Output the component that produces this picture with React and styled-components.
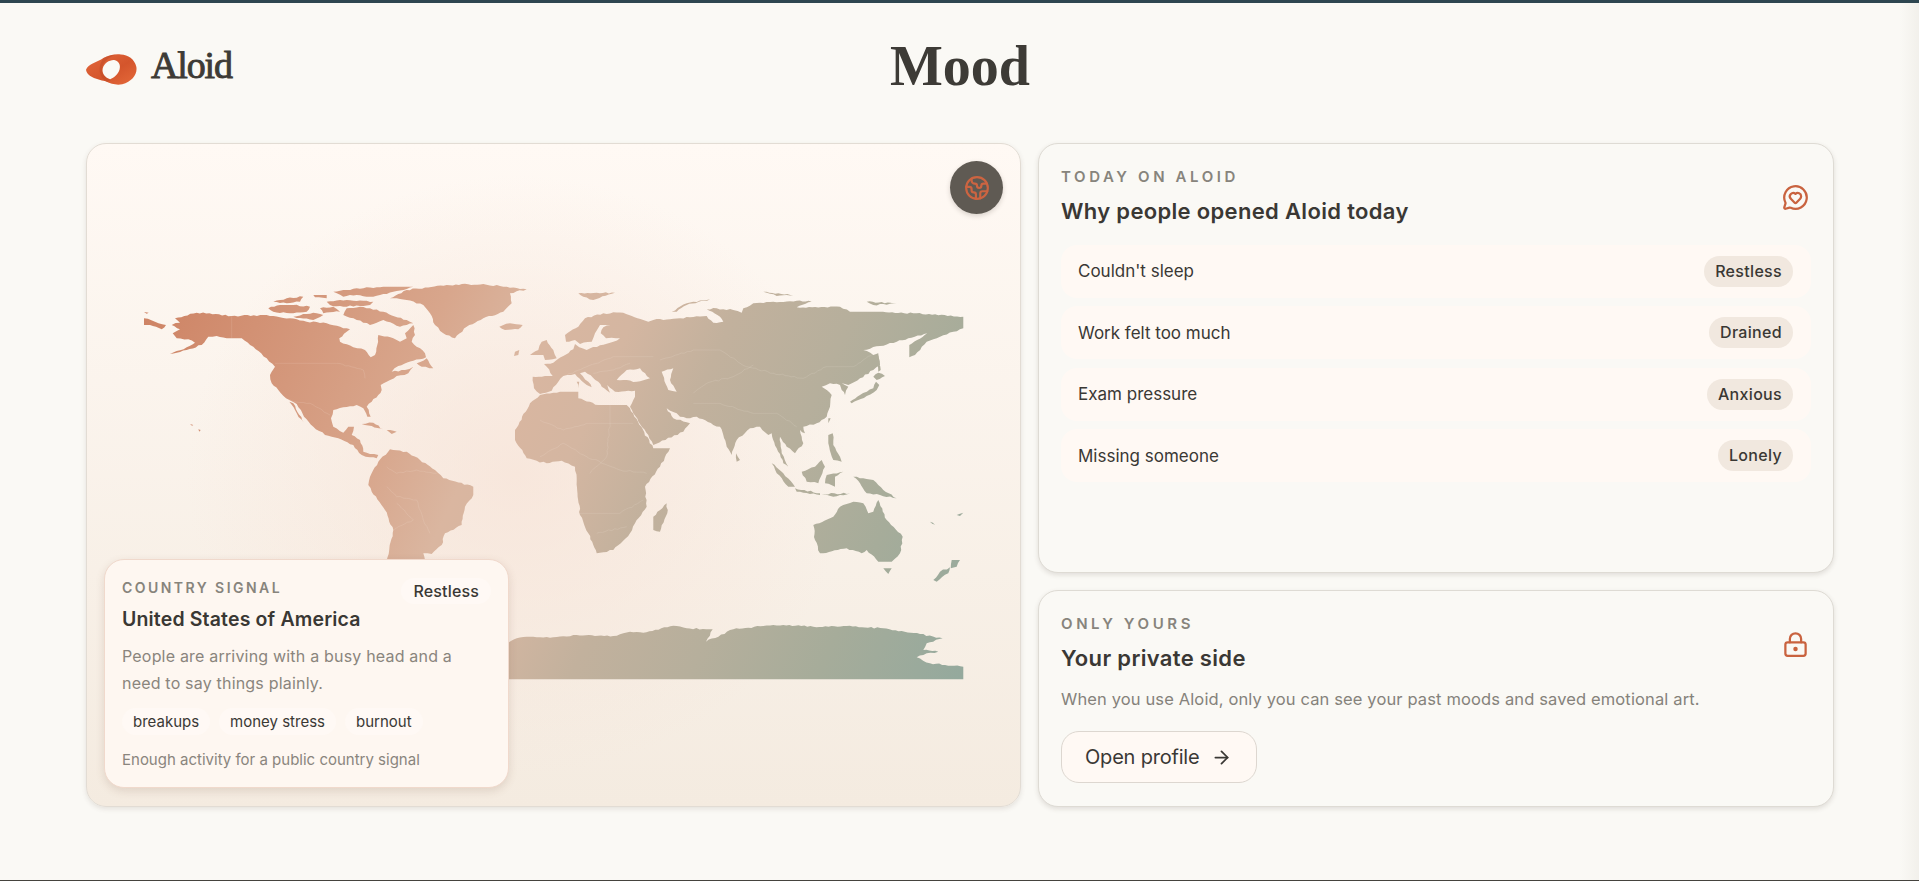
import React from "react";
import styled, { createGlobalStyle } from "styled-components";
import { Earth, MessageCircleHeart, LockKeyhole, ArrowRight } from "lucide-react";

const Global = createGlobalStyle`
  html, body { margin: 0; padding: 0; height: 100%; overflow: hidden; }
  body { background: #faf9f5; color: #3a3834; font-family: Inter, "Open Sans", sans-serif; }
  * { box-sizing: border-box; }
`;

const Page = styled.div`
  height: 881px;
  border-top: 3px solid #2e4650;
  border-bottom: 1px solid #45433e;
  background: linear-gradient(90deg, #faf9f5 0, #faf9f5 99%, #f2f0eb 100%);
  padding: 0 85px 0 86px;
`;
const Header = styled.header`
  height: 140px;
  display: grid;
  grid-template-columns: 1fr auto 1fr;
  align-items: start;
`;
const Brand = styled.div`
  display: flex;
  align-items: center;
  gap: 14px;
  padding-top: 43px;
`;
const BrandName = styled.span`
  margin-bottom: 9px;
  font: 400 38px/1 "Liberation Serif", serif;
  -webkit-text-stroke: 0.9px #3d3b36;
  letter-spacing: -0.03em;
  color: #3d3b36;
`;
const PageTitle = styled.h1`
  margin: 0;
  padding-top: 35px;
  font: 700 56px/1 "Liberation Serif", serif;
  color: #3d3b36;
`;
const Board = styled.main`
  display: grid;
  grid-template-columns: 935px 796px;
  column-gap: 17px;
  height: 664px;
`;
const MapCard = styled.section`
  position: relative;
  overflow: hidden;
  border: 1px solid #e2dcd4;
  border-radius: 20px;
  box-shadow: 0 2px 5px rgba(70, 60, 50, 0.12);
  background:
    radial-gradient(ellipse 330px 300px at 46% 50%, rgba(247, 226, 214, 0.7), rgba(247, 226, 214, 0)),
    linear-gradient(180deg, #fff9f4 0%, #f4ebe0 100%);
`;
const MapSvg = styled.svg`
  display: block;
  width: 100%;
  height: 100%;
`;
const GlobeButton = styled.div`
  position: absolute;
  top: 17px;
  right: 17px;
  width: 53px;
  height: 53px;
  border-radius: 50%;
  background: #5f5a53;
  color: #cc6441;
  display: flex;
  align-items: center;
  justify-content: center;
  box-shadow: 0 2px 5px rgba(70, 60, 50, 0.2);
`;
const SignalPanel = styled.aside`
  position: absolute;
  left: 17px;
  bottom: 18px;
  width: 405px;
  height: 229px;
  padding: 17px;
  border: 1px solid #f0d9cc;
  border-radius: 20px;
  background: #fef7f1;
  box-shadow: 0 3px 8px rgba(120, 80, 60, 0.16);
`;
const SignalTop = styled.div`
  display: flex;
  justify-content: space-between;
  align-items: flex-start;
  padding-top: 1px;
`;
const Eyebrow = styled.div`
  font-size: ${(p) => p.$size || 15}px;
  line-height: 20px;
  font-weight: 600;
  letter-spacing: ${(p) => p.$track || 0.24}em;
  color: #87847c;
`;
const SignalChip = styled.span`
  margin: 0;
  padding: 0 12px;
  height: 26px;
  line-height: 26px;
  font-size: 16px;
  font-weight: 500;
  letter-spacing: 0.01em;
  border-radius: 13px;
  background: #fff9f5;
`;
const CountryName = styled.h3`
  margin: 2px 0 0;
  font-size: 19.5px;
  line-height: 26px;
  font-weight: 600;
  letter-spacing: 0.008em;
  color: #3a3834;
`;
const SignalText = styled.p`
  margin: 11px 0 0;
  font-size: 16px;
  line-height: 27px;
  letter-spacing: 0.012em;
  color: #8a857d;
`;
const Chips = styled.div`
  display: flex;
  gap: 9px;
  margin-top: 11px;
`;
const Chip = styled.span`
  padding: 0 11px;
  height: 27px;
  line-height: 27px;
  font-size: 15px;
  border-radius: 14px;
  background: #fff9f5;
`;
const SignalFoot = styled.div`
  margin-top: 15px;
  font-size: 15px;
  line-height: 20px;
  color: #8a857d;
`;
const Side = styled.div`
  display: grid;
  grid-template-rows: 430px 217px;
  row-gap: 17px;
`;
const Card = styled.section`
  border: 1px solid #dedbd4;
  border-radius: 20px;
  background: #faf9f5;
  box-shadow: 0 2px 5px rgba(70, 60, 50, 0.14);
  padding: 23px 22px 0;
`;
const CardHead = styled.div`
  display: flex;
  justify-content: space-between;
  align-items: flex-start;
  padding-right: 2px;
`;
const CardTitle = styled.h2`
  margin: 9px 0 0;
  font-size: 22px;
  line-height: 30px;
  font-weight: 600;
  letter-spacing: 0.015em;
  color: #3a3834;
`;
const IconSlot = styled.div`
  color: #c9633f;
  display: flex;
  margin-top: 17px;
`;
const Rows = styled.div`
  display: flex;
  flex-direction: column;
  gap: 8.5px;
  margin-top: 18.5px;
`;
const Row = styled.div`
  height: 53px;
  padding: 0 18px 0 17px;
  display: flex;
  align-items: center;
  justify-content: space-between;
  border-radius: 16px;
  background: #fff9f4;
  font-size: 17px;
`;
const Pill = styled.span`
  height: 31px;
  line-height: 31px;
  padding: 0 11px;
  border-radius: 16px;
  background: #f1e8df;
  font-size: 16px;
  font-weight: 500;
  letter-spacing: 0.02em;
`;
const Note = styled.p`
  margin: 13px 0 0;
  font-size: 16.5px;
  line-height: 26px;
  letter-spacing: 0.008em;
  color: #85827b;
`;
const OpenButton = styled.button`
  margin-top: 19px;
  height: 52px;
  width: 196px;
  display: flex;
  align-items: center;
  gap: 12px;
  padding: 0 0 0 23px;
  border: 1px solid #ddd7d0;
  border-radius: 18px;
  background: #fff9f4;
  color: #3a3834;
  font: 400 20px Inter, sans-serif;
  letter-spacing: -0.01em;
`;

let seed = 17;
const rnd = () => {
  seed = (seed * 16807) % 2147483647;
  return seed / 2147483647 - 0.5;
};
const coast = (ox, oy, s, close) => {
  const pts = s
    .trim()
    .split(/\s+/)
    .map((p) => {
      const [x, y] = p.split(",").map(Number);
      return [ox + x / 3, oy + y / 3];
    });
  const out = [];
  const n = close ? pts.length : pts.length - 1;
  for (let i = 0; i < n; i++) {
    const a = pts[i];
    const b = pts[(i + 1) % pts.length];
    out.push(a);
    const dx = b[0] - a[0];
    const dy = b[1] - a[1];
    const len = Math.hypot(dx, dy);
    if (len > 5 && dx !== 0 && dy !== 0) {
      const steps = Math.floor(len / 3);
      for (let k = 1; k < steps; k++) {
        const t = k / steps;
        const w = rnd() * 1.5;
        out.push([a[0] + dx * t - (dy / len) * w, a[1] + dy * t + (dx / len) * w]);
      }
    }
  }
  if (!close) out.push(pts[pts.length - 1]);
  return "M" + out.map((p) => `${p[0].toFixed(1)} ${p[1].toFixed(1)}`).join("L") + (close ? "Z" : "");
};

const AM = (s) => coast(130, 270, s, true);
const EU = (s) => coast(520, 270, s, true);
const SO = (s) => coast(530, 560, s, true);
const LINE_A = (s) => coast(130, 270, s, false);
const LINE_E = (s) => coast(520, 270, s, false);

const LAND = [
  AM("42,145 75,155 108,165 95,178 60,165 42,165"),
  AM("42,126 56,128 50,131"),
  AM("135,145 200,128 305,138 400,135 410,135 480,145 530,155 590,160 640,175 660,178 650,185 628,205 630,215 670,232 705,240 722,262 735,255 742,225 745,195 790,205 810,215 830,205 825,190 850,165 855,195 845,215 885,250 888,262 850,272 805,288 785,305 825,300 850,290 835,310 800,318 770,335 752,345 755,360 745,375 725,395 710,410 722,440 712,440 700,415 680,405 640,412 610,420 603,445 610,470 640,488 655,470 672,470 665,495 690,510 700,545 720,552 745,555 740,565 720,562 695,555 670,525 625,505 585,495 550,470 522,440 500,402 482,392 468,385 445,360 425,340 420,315 435,290 410,265 370,230 335,205 290,205 260,198 235,200 215,225 170,240 120,252 170,232 195,218 175,208 140,205 128,190 150,178 125,165 150,158"),
  AM("478,395 490,400 522,458 500,430"),
  AM("430,95 470,85 520,80 510,95 470,100"),
  AM("415,115 450,105 490,105 540,110 530,125 480,130 430,125"),
  AM("550,75 590,75 590,85 555,82"),
  AM("610,65 680,55 760,50 850,50 790,65 730,80 680,75 640,80"),
  AM("590,95 650,90 730,95 720,105 640,110 600,105"),
  AM("570,115 610,110 630,125 580,130"),
  AM("650,115 690,110 720,115 760,125 830,150 850,160 810,170 760,150 720,165 680,150 640,135"),
  AM("490,140 550,128 580,135 550,150"),
  AM("860,280 890,265 910,295 875,290"),
  AM("780,85 830,60 950,45 1060,42 1120,50 1190,58 1140,70 1145,100 1120,125 1060,145 1010,170 975,205 940,190 915,165 900,130 880,105 830,90"),
  AM("1108,170 1140,160 1178,165 1165,178 1125,180"),
  AM("180,462 190,465 186,467"),
  AM("205,478 212,480 208,485"),
  AM("695,462 730,458 760,478 725,468"),
  AM("770,480 800,485 785,492"),
  AM("720,620 745,575 780,538 830,545 870,570 915,600 940,625 1030,650 1030,675 1005,710 995,765 945,790 935,825 905,852 880,850 885,880 770,880 790,780 765,720 725,665 715,645"),
  EU("30,255 55,240 65,215 80,210 100,240 110,265 75,270 70,255"),
  EU("-15,245 -2,240 -5,255 -18,258"),
  [
    EU("60,372 42,355 38,320 75,318 98,318 80,290 72,282 100,278 130,258 160,238 165,222 178,232 200,240 240,226 280,215 300,205 275,203 258,205 242,190 250,172 272,165 240,165 225,190 215,215 180,222 165,210 138,215 135,195 175,170 195,145 250,130 310,128 370,150 385,155 400,150 480,145 560,138 580,158 610,155 600,140 560,118 590,115 640,120 665,128 670,115 700,100 760,95 830,92 875,95 830,112 960,110 990,125 1080,125 1180,130 1330,140 1330,175 1300,185 1260,200 1220,215 1185,255 1168,262 1168,225 1222,190 1165,205 1130,215 1080,228 1030,240 1060,255 1075,250 1080,285 1060,300 1020,325 985,345 965,340 985,350 975,375 965,360 960,345 930,340 905,350 935,375 930,410 920,440 890,460 850,470 855,490 840,480 850,520 825,550 800,530 780,500 785,550 805,590 790,580 770,535 755,490 745,495 720,470 690,475 650,510 635,555 620,530 600,470 580,465 530,440 500,445 480,440 470,430 440,415 460,445 510,460 490,485 400,525 385,495 340,430 330,410 345,380 345,362 285,365 262,345 270,368 245,350 235,335 195,305 180,310 205,335 215,352 200,345 165,312 130,318 115,335 95,362"),
    EU("290,330 320,300 360,295 390,325 350,335"),
    EU("425,305 460,295 450,330 470,365 445,360"),
  ].join(""),
  EU("-15,480 30,400 60,375 120,365 175,365 175,385 235,405 320,405 330,415 400,535 450,535 420,590 375,650 380,710 345,760 330,790 280,840 230,850 205,790 180,735 170,625 165,590 125,572 80,580 20,565 -15,510"),
  EU("440,700 442,730 420,785 400,780 400,740"),
  EU("648,550 660,570 650,575"),
  EU("990,395 1020,375 1060,355 1068,335 1078,345 1070,360 1040,378 995,400"),
  EU("1072,250 1082,300 1075,305 1070,280"),
  EU("1060,320 1075,308 1095,318 1070,330"),
  EU("170,335 178,335 175,355"),
  EU("925,445 932,445 925,460"),
  EU("925,495 938,490 940,525 960,560 965,575 940,570 925,520"),
  EU("755,580 790,610 825,650 805,650 770,610"),
  EU("825,655 900,670 900,675 830,665"),
  EU("905,672 990,670 940,680"),
  EU("845,605 885,590 905,570 915,590 895,640 860,635"),
  EU("920,615 970,605 945,620 945,650 915,640"),
  EU("1000,620 1060,630 1090,660 1130,685 1080,675 1040,670 1020,640"),
  EU("880,765 940,740 960,710 1000,695 1030,700 1045,730 1060,725 1075,690 1100,750 1148,800 1140,850 1115,875 1075,875 1040,840 1025,850 980,835 900,850 885,810"),
  EU("175,70 285,68 220,90 190,80"),
  EU("455,125 500,100 570,88 500,105 470,125"),
  EU("730,65 820,75 770,78"),
  EU("1040,95 1130,100 1060,105"),
  EU("1230,755 1245,765 1235,760"),
  EU("1310,735 1330,728 1320,738"),
  SO("1060,25 1085,25 1075,42"),
  SO("1265,0 1290,0 1280,20 1262,25"),
  SO("1210,60 1230,35 1260,22 1255,40 1220,65"),
  SO("-75,250 -40,235 0,230 70,232 140,225 250,228 300,215 340,218 430,197 470,205 548,208 528,245 610,208 700,198 760,195 850,200 950,198 1060,205 1170,222 1238,235 1190,250 1180,270 1225,275 1190,280 1160,292 1200,310 1300,320 1300,358 -75,358"),
];

const BORDERS = [
  LINE_A("305,138 305,205"),
  LINE_A("435,280 620,280 700,300 705,325"),
  LINE_A("470,390 540,400 600,435"),
  LINE_A("770,590 800,610 860,600 920,610"),
  LINE_A("770,650 800,680 860,690 880,750 900,790"),
  LINE_A("800,700 850,750 790,780"),
  LINE_E("420,270 520,240 600,240 680,290 760,310 850,325 920,290 1000,290 1060,250"),
  LINE_E("520,370 560,340 640,320 700,285"),
  LINE_E("520,400 600,400 700,430 770,430 830,470"),
  LINE_E("60,450 130,480 200,460 270,460 340,460"),
  LINE_E("270,400 270,460 260,560 210,610"),
  LINE_E("60,560 130,520 200,560 300,600 380,610"),
  LINE_E("180,730 300,730 370,690"),
  LINE_E("230,790 320,770"),
  LINE_E("130,320 200,290 280,260 400,260"),
  LINE_E("220,310 280,300 330,280"),
];

const WorldMap = () => (
  <MapSvg viewBox="87 144 933 662" aria-hidden="true">
    <defs>
      <linearGradient id="land" gradientUnits="userSpaceOnUse" x1="143" y1="310" x2="964" y2="680">
        <stop offset="0" stopColor="#ce8364" />
        <stop offset="0.3" stopColor="#d8a68c" />
        <stop offset="0.4" stopColor="#dab6a0" />
        <stop offset="0.5" stopColor="#d4b6a1" />
        <stop offset="0.6" stopColor="#c2b19d" />
        <stop offset="0.72" stopColor="#b6af9c" />
        <stop offset="0.85" stopColor="#a6ac9a" />
        <stop offset="1" stopColor="#94a99d" />
      </linearGradient>
    </defs>
    {LAND.map((d, i) => (
      <path key={i} d={d} fill="url(#land)" fillRule="evenodd" />
    ))}
    {BORDERS.map((d, i) => (
      <path key={i} d={d} fill="none" stroke="rgba(255,245,235,.2)" strokeWidth="0.6" />
    ))}
  </MapSvg>
);

const Logo = () => (
  <svg width="51" height="31" viewBox="0 0 152 92" aria-hidden="true">
    <defs>
      <linearGradient id="logoFill" x1="0" y1="0" x2="1" y2="1">
        <stop offset="0" stopColor="#e3683c" />
        <stop offset="0.55" stopColor="#d4552c" />
        <stop offset="1" stopColor="#e56a3a" />
      </linearGradient>
    </defs>
    <path
      fill="url(#logoFill)"
      d="M0 47C6 30 34 24 52 12C68 2 88-1 104 1C125 2 145 14 150 38C154 60 138 82 108 90C90 94 74 88 60 82C40 76 4 72 0 47Z"
    />
    <path fill="#bd4a25" opacity="0.5" d="M52 12C62 6 74 3 88 2C66 10 50 24 48 42C46 58 58 70 74 78L62 83C44 72 30 46 52 12Z" />
    <path fill="#faf9f5" d="M50 42C54 28 70 17 84 18C98 20 104 34 100 46C96 60 84 70 72 75C58 70 46 58 50 42Z" />
  </svg>
);

const REASONS = [
  ["Couldn't sleep", "Restless"],
  ["Work felt too much", "Drained"],
  ["Exam pressure", "Anxious"],
  ["Missing someone", "Lonely"],
];

export default function App() {
  return (
    <Page>
      <Global />
      <Header>
        <Brand>
          <Logo />
          <BrandName>Aloid</BrandName>
        </Brand>
        <PageTitle>Mood</PageTitle>
        <div />
      </Header>
      <Board>
        <MapCard>
          <WorldMap />
          <GlobeButton>
            <Earth size={26} strokeWidth={2} />
          </GlobeButton>
          <SignalPanel>
            <SignalTop>
              <Eyebrow $size={14} $track={0.175}>COUNTRY SIGNAL</Eyebrow>
              <SignalChip>Restless</SignalChip>
            </SignalTop>
            <CountryName>United States of America</CountryName>
            <SignalText>
              People are arriving with a busy head and a
              <br />
              need to say things plainly.
            </SignalText>
            <Chips>
              <Chip>breakups</Chip>
              <Chip>money stress</Chip>
              <Chip>burnout</Chip>
            </Chips>
            <SignalFoot>Enough activity for a public country signal</SignalFoot>
          </SignalPanel>
        </MapCard>
        <Side>
          <Card>
            <CardHead>
              <div>
                <Eyebrow>TODAY ON ALOID</Eyebrow>
                <CardTitle>Why people opened Aloid today</CardTitle>
              </div>
              <IconSlot>
                <MessageCircleHeart size={27} strokeWidth={2} />
              </IconSlot>
            </CardHead>
            <Rows>
              {REASONS.map(([reason, mood]) => (
                <Row key={reason}>
                  <span>{reason}</span>
                  <Pill>{mood}</Pill>
                </Row>
              ))}
            </Rows>
          </Card>
          <Card>
            <CardHead>
              <div>
                <Eyebrow>ONLY YOURS</Eyebrow>
                <CardTitle>Your private side</CardTitle>
              </div>
              <IconSlot>
                <LockKeyhole size={27} strokeWidth={2} />
              </IconSlot>
            </CardHead>
            <Note>When you use Aloid, only you can see your past moods and saved emotional art.</Note>
            <OpenButton>
              Open profile
              <ArrowRight size={21} strokeWidth={2} />
            </OpenButton>
          </Card>
        </Side>
      </Board>
    </Page>
  );
}
